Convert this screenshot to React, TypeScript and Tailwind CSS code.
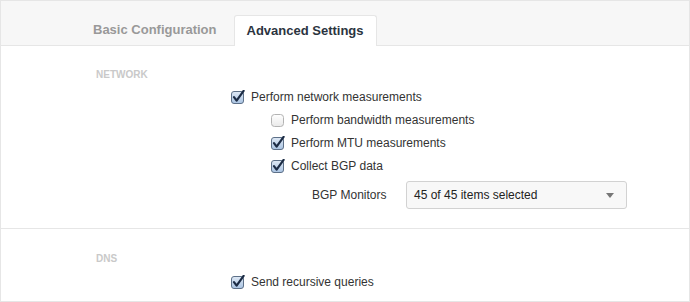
import React from "react";

function Check({ checked }: { checked: boolean }) {
  return (
    <svg width="14" height="14" viewBox="0 0 14 14" className="shrink-0">
      <defs>
        <linearGradient id="cbu" x1="0" y1="0" x2="0" y2="1">
          <stop offset="0" stopColor="#ffffff" />
          <stop offset="1" stopColor="#e9e9e9" />
        </linearGradient>
        <linearGradient id="cbc" x1="0" y1="0" x2="0" y2="1">
          <stop offset="0" stopColor="#dfe9f5" />
          <stop offset="1" stopColor="#a9c3e2" />
        </linearGradient>
      </defs>
      {checked ? (
        <>
          <rect x="0.5" y="1.5" width="12" height="12" rx="2.5" fill="url(#cbc)" stroke="#5d7088" />
          <path d="M3 7.2 L5.6 10.6 L12.6 0.8" fill="none" stroke="#1c2c45" strokeWidth="2.2" strokeLinecap="round" strokeLinejoin="round" />
        </>
      ) : (
        <rect x="0.5" y="1.5" width="12" height="12" rx="3" fill="url(#cbu)" stroke="#b3b3b3" />
      )}
    </svg>
  );
}

function Row({ checked, label, indent }: { checked: boolean; label: string; indent: string }) {
  return (
    <div className={`flex h-[23px] items-center ${indent}`}>
      <Check checked={checked} />
      <span className="ml-[6px] text-[12px] text-[#333]">{label}</span>
    </div>
  );
}

export default function App() {
  return (
    <div
      className="w-[690px] h-[302px] border border-[#e6e6e6] bg-white overflow-hidden"
      style={{ fontFamily: '"Liberation Sans", Arial, sans-serif' }}
    >
      <div className="flex h-[45px] items-end border-b border-[#e6e6e6] bg-[#f7f7f7] pl-[92px]">
        <div className="flex h-[30px] items-center text-[13px] font-bold text-[#999]">Basic Configuration</div>
        <div className="-mb-px ml-[17px] flex h-[31px] items-center rounded-t-[3px] border border-b-0 border-[#e6e6e6] bg-white px-[12px] text-[13px] font-bold text-[#2b3440]">
          Advanced Settings
        </div>
      </div>

      <div className="h-[183px] border-b border-[#e6e6e6] pt-[23px]">
        <div className="pl-[95px] text-[10px] font-bold leading-[11px] text-[#c9c9c9]">NETWORK</div>
        <div className="mt-[5px]">
          <Row checked label="Perform network measurements" indent="pl-[230px]" />
          <Row checked={false} label="Perform bandwidth measurements" indent="pl-[270px]" />
          <Row checked label="Perform MTU measurements" indent="pl-[270px]" />
          <Row checked label="Collect BGP data" indent="pl-[270px]" />
        </div>
        <div className="mt-[4px] flex items-center pl-[311px]">
          <span className="w-[94px] text-[12px] text-[#333]">BGP Monitors</span>
          <div className="flex h-[28px] w-[221px] items-center justify-between rounded-[3px] border border-[#d2d2d2] bg-[#f8f8f8] pl-[7px] pr-[12px]">
            <span className="text-[12px] text-[#222]">45 of 45 items selected</span>
            <svg width="8" height="5" viewBox="0 0 8 5">
              <path d="M0 0 L8 0 L4 5 Z" fill="#777" />
            </svg>
          </div>
        </div>
      </div>

      <div className="pt-[24px]">
        <div className="pl-[95px] text-[10px] font-bold leading-[11px] text-[#c9c9c9]">DNS</div>
        <div className="mt-[6px]">
          <Row checked label="Send recursive queries" indent="pl-[230px]" />
        </div>
      </div>
    </div>
  );
}
